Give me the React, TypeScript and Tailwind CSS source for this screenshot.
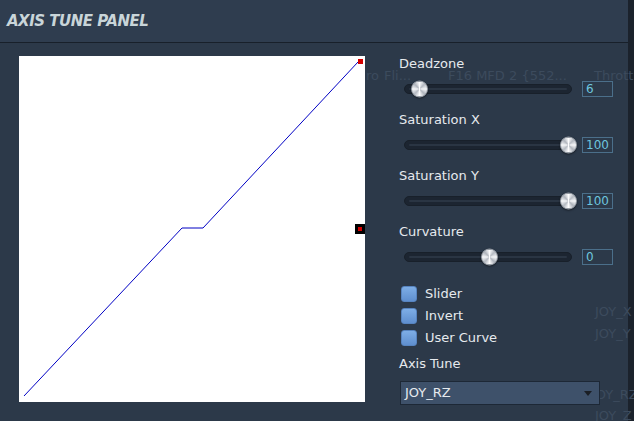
import { FC } from 'react';

const font = { fontFamily: '"DejaVu Sans", "Liberation Sans", sans-serif' };

interface SliderRowProps {
  label: string
  value: string
  knob: number
}

const SliderRow: FC<SliderRowProps> = ({ label, value, knob }) => {
  return (
    <div className="flex flex-col">
      <div className="h-[16px] text-[13px] leading-[16px] text-[#e6eaee] pl-[0px]">{label}</div>
      <div className="mt-[8px] h-[17px] flex items-center">
        <div className="relative ml-[5px] w-[168px] h-[10px] rounded-full bg-[#1c2531] border border-[#18202a] flex items-center px-[4px]">
          <div className="w-full h-[2px] rounded-full bg-[#2a3543]" />
          <div
            className="absolute top-1/2 -translate-y-1/2 w-[17px] h-[17px] rounded-full border border-[#9aa0a8] bg-[conic-gradient(#fdfdfe,#b4b9c1,#f6f7f9,#aeb3bb,#fdfdfe,#b4b9c1,#f6f7f9,#aeb3bb,#fdfdfe)] shadow-[0_1px_2px_rgba(0,0,0,0.5)]"
            style={{ left: knob - 8.5 }}
          />
        </div>
        <div className="ml-[10px] w-[31px] h-[16px] border border-[#4b6f8a] text-[12px] leading-[14px] text-[#6cc6de] pl-[3px]">{value}</div>
      </div>
    </div>
  )
}

const CheckRow: FC<{ label: string }> = ({ label }) => (
  <div className="flex items-center h-[16px]">
    <div className="ml-[2px] w-[16px] h-[16px] rounded-[3px] bg-gradient-to-b from-[#7eaee6] to-[#5f8fcf] border border-[#5784c0]" />
    <span className="ml-[8px] text-[13px] text-[#e6eaee]">{label}</span>
  </div>
)

const Ghost: FC<{ x: number; y: number; text: string }> = ({ x, y, text }) => (
  <span className="absolute text-[13px] leading-[16px] text-[#3c4b5d]" style={{ left: x, top: y }}>{text}</span>
)

const App: FC = () => {
  return (
    <div className="relative w-[634px] h-[421px] overflow-hidden bg-[#1b222c]" style={font}>
      <div className="relative w-[628px] h-[421px] flex flex-col bg-[#2c3949]">
        <div className="absolute inset-0 top-[44px] pointer-events-none">
          <Ghost x={366} y={24} text="ro" />
          <Ghost x={384} y={24} text="Fli..." />
          <Ghost x={448} y={24} text="F16 MFD 2 {552..." />
          <Ghost x={594} y={24} text="Throttl" />
          <Ghost x={595} y={260} text="JOY_X" />
          <Ghost x={595} y={282} text="JOY_Y" />
          <Ghost x={592} y={343} text="JOY_RZ" />
          <Ghost x={595} y={364} text="JOY_Z" />
        </div>
        <div className="h-[43px] bg-[#2f3d4f] border-b border-[#18202a] flex items-center pl-[7px]">
          <span className="text-[15px] font-bold italic tracking-[-0.5px] text-[#c9d5d9]">AXIS TUNE PANEL</span>
        </div>
        <div className="relative flex pt-[13px] pl-[19px]">
          <div className="w-[346px] h-[346px] bg-white">
            <svg width="346" height="346" viewBox="0 0 346 346">
              <polyline
                points="5,340 163,172 184,172 339,6"
                fill="none"
                stroke="#0000c4"
                strokeWidth="1"
              />
              <rect x="339" y="3" width="5" height="5" fill="#d40000" />
              <rect x="336" y="168" width="10" height="10" fill="#000" />
              <rect x="339" y="171" width="4" height="4" fill="#d40000" />
            </svg>
          </div>
          <div className="ml-[34px] flex flex-col">
            <div className="flex flex-col gap-[15px]">
              <SliderRow label="Deadzone" value="6" knob={14} />
              <SliderRow label="Saturation X" value="100" knob={163} />
              <SliderRow label="Saturation Y" value="100" knob={163} />
              <SliderRow label="Curvature" value="0" knob={84} />
            </div>
            <div className="mt-[21px] flex flex-col gap-[6px]">
              <CheckRow label="Slider" />
              <CheckRow label="Invert" />
              <CheckRow label="User Curve" />
            </div>
            <div className="mt-[10px] h-[16px] text-[13px] leading-[16px] text-[#e6eaee]">Axis Tune</div>
            <div className="mt-[9px] ml-[1px] w-[200px] h-[24px] bg-[#3e516a] border border-[#1d2836] flex items-center justify-between pl-[4px] pr-[7px]">
              <span className="text-[13px] text-[#e6eaee]">JOY_RZ</span>
              <svg width="8" height="5" viewBox="0 0 8 5"><polygon points="0,0 8,0 4,5" fill="#1b1f25" /></svg>
            </div>
          </div>
        </div>
      </div>
    </div>
  )
}

export default App
